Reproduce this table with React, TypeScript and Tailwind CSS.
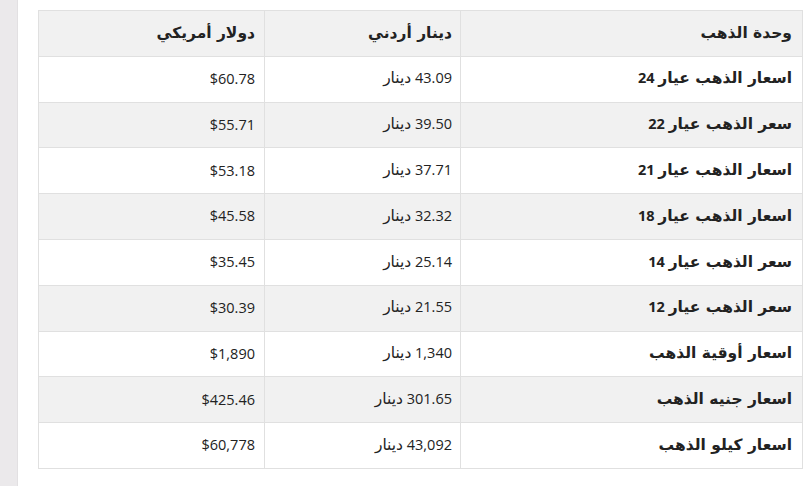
import React from 'react';

const rows = [
  { unit: 'اسعار الذهب عيار 24', jod: '43.09 دينار', usd: '$60.78' },
  { unit: 'سعر الذهب عيار 22', jod: '39.50 دينار', usd: '$55.71' },
  { unit: 'اسعار الذهب عيار 21', jod: '37.71 دينار', usd: '$53.18' },
  { unit: 'اسعار الذهب عيار 18', jod: '32.32 دينار', usd: '$45.58' },
  { unit: 'سعر الذهب عيار 14', jod: '25.14 دينار', usd: '$35.45' },
  { unit: 'سعر الذهب عيار 12', jod: '21.55 دينار', usd: '$30.39' },
  { unit: 'اسعار أوقية الذهب', jod: '1,340 دينار', usd: '$1,890' },
  { unit: 'اسعار جنيه الذهب', jod: '301.65 دينار', usd: '$425.46' },
  { unit: 'اسعار كيلو الذهب', jod: '43,092 دينار', usd: '$60,778' },
];

// Arabic runs go in DejaVu Sans (wider Arabic), digits stay in Open Sans
function Mixed({ text }: { text: string }) {
  const parts = text.split(/([\u0600-\u06FF][\u0600-\u06FF ]*[\u0600-\u06FF]|[\u0600-\u06FF])/);
  return (
    <>
      {parts.map((p, i) =>
        /[\u0600-\u06FF]/.test(p) ? (
          <span key={i} className="font-['DejaVu_Sans',sans-serif] text-[15.5px]">
            {p}
          </span>
        ) : (
          <span key={i}>{p}</span>
        )
      )}
    </>
  );
}

const cell = 'border border-[#e0e0e0] text-right align-middle';

export default function App() {
  return (
    <div className="flex h-[486px] w-[812px] overflow-hidden bg-white font-['Open_Sans',sans-serif] text-[#222]">
      {/* side strip */}
      <div className="w-[18px] shrink-0 border-r border-[#e2e0e2] bg-[#ebe9eb]" />

      <div className="flex-1 pl-[20px] pr-[10px] pt-[10px]">
        <table dir="rtl" className="w-[764px] table-fixed border-collapse text-[14.5px] leading-none">
          <colgroup>
            <col className="w-[342px]" />
            <col className="w-[196px]" />
            <col className="w-[226px]" />
          </colgroup>
          <thead>
            <tr className="h-[45.8px] bg-[#f1f1f1]">
              <th className={`${cell} px-[10px] font-bold`}><Mixed text="وحدة الذهب" /></th>
              <th className={`${cell} px-[8px] font-bold`}><Mixed text="دينار أردني" /></th>
              <th className={`${cell} px-[9px] font-bold`}><Mixed text="دولار أمريكي" /></th>
            </tr>
          </thead>
          <tbody>
            {rows.map((r, i) => (
              <tr key={i} className={i % 2 === 1 ? 'h-[45.8px] bg-[#f1f1f1]' : 'h-[45.8px] bg-white'}>
                <td className={`${cell} px-[10px] font-bold`}><Mixed text={r.unit} /></td>
                <td className={`${cell} px-[8px]`}><Mixed text={r.jod} /></td>
                <td className={`${cell} px-[9px]`}>{r.usd}</td>
              </tr>
            ))}
          </tbody>
        </table>
      </div>
    </div>
  );
}
